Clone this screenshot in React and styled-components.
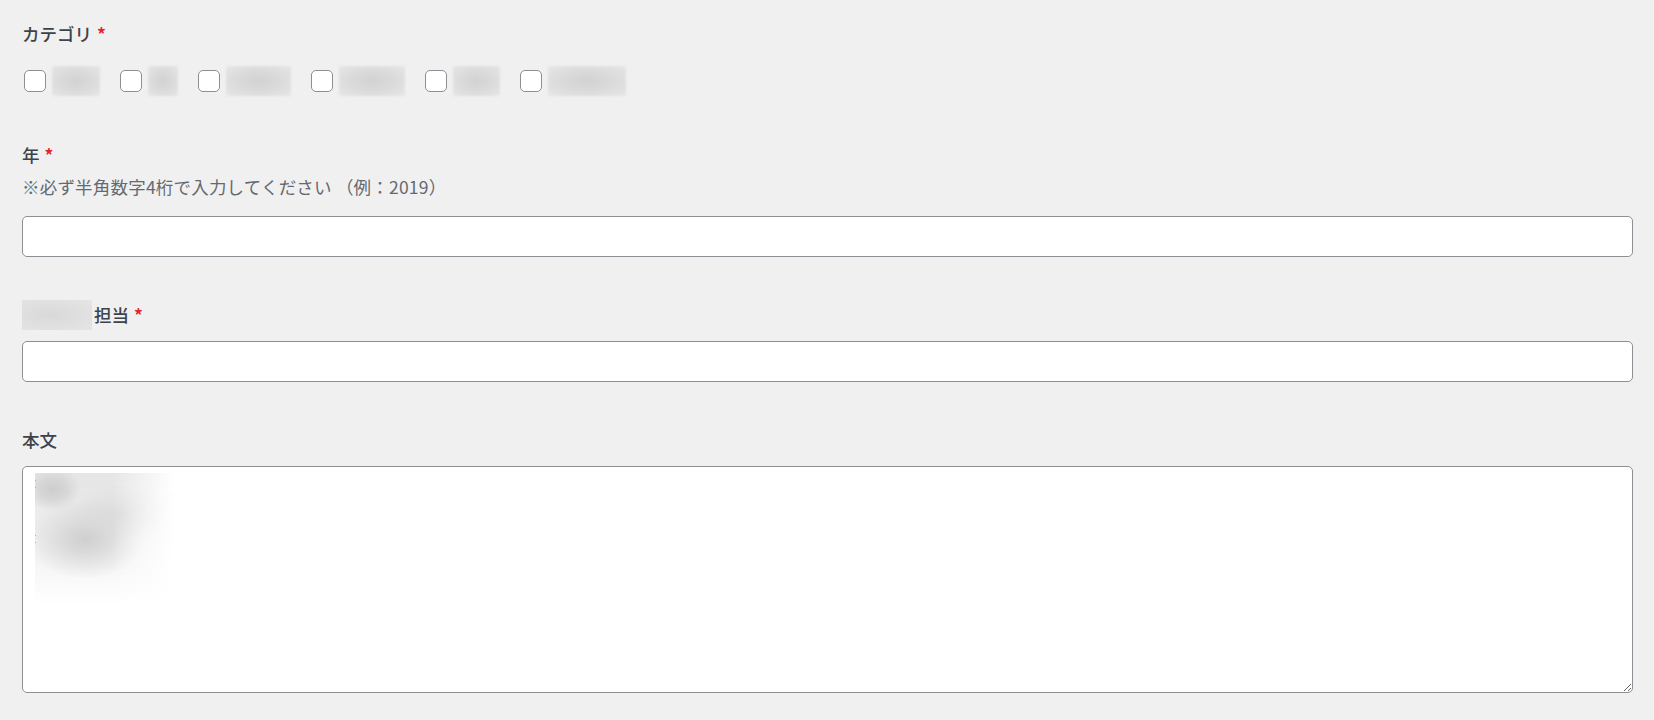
import React from 'react';
import styled, { createGlobalStyle } from 'styled-components';

const GlobalStyle = createGlobalStyle`
  html, body {
    margin: 0;
    padding: 0;
    background: #f0f0f1;
  }

  body {
    font-family: "Noto Sans CJK JP", "Noto Sans", "Liberation Sans", sans-serif;
    color: #3c434a;
  }
`;

const categories = [48, 30, 65, 66, 47, 78];

export default function App() {
  return (
    <>
      <GlobalStyle />
      <Form>
        <Field>
          <Label>
            カテゴリ
            <Required>*</Required>
          </Label>
          <CheckRow>
            {categories.map((w, i) => (
              <CheckItem key={i}>
                <Checkbox type="checkbox" />
                <Blurred style={{ width: w }} />
              </CheckItem>
            ))}
          </CheckRow>
        </Field>

        <Field>
          <Label>
            年
            <Required>*</Required>
          </Label>
          <Description>※必ず半角数字4桁で入力してください （例：2019）</Description>
          <TextInput type="text" gap={17} />
        </Field>

        <Field>
          <Label>
            <NameBlur />
            担当
            <Required>*</Required>
          </Label>
          <TextInput type="text" />
        </Field>

        <Field>
          <Label>本文</Label>
          <AreaWrap>
            <TextArea />
            <BodyBlur>
              <Mark top={7} />
              <Mark top={62} />
            </BodyBlur>
          </AreaWrap>
        </Field>
      </Form>
    </>
  );
}

const Form = styled.div`
  padding: 22px 21px 0 22px;
`;

const Field = styled.div`
  display: flex;
  flex-direction: column;
  margin-bottom: 46px;
`;

const Label = styled.label`
  display: flex;
  align-items: center;
  height: 24px;
  font-size: 17.5px;
  line-height: 24px;
  font-weight: 500;
  color: #3c434a;
`;

const Required = styled.span`
  margin-left: 5px;
  color: #e3262b;
  font-weight: 600;
`;

const CheckRow = styled.div`
  display: flex;
  align-items: center;
  height: 32px;
  margin-top: 19px;
  padding-left: 2px;
`;

const CheckItem = styled.div`
  display: flex;
  align-items: center;
  gap: 6px;
  margin-right: 20px;
`;

const Checkbox = styled.input`
  appearance: none;
  box-sizing: border-box;
  width: 22px;
  height: 22px;
  margin: 0;
  border: 1px solid #8c8f94;
  border-radius: 5px;
  background: #fff;
`;

const Blurred = styled.span`
  display: block;
  height: 30px;
  border-radius: 2px;
  background: radial-gradient(ellipse at center, #d2d2d2 0%, #dadada 45%, #e6e6e6 100%);
  filter: blur(1px);
`;

const NameBlur = styled.span`
  display: block;
  width: 70px;
  height: 30px;
  margin: -3px 2px -3px 0;
  background: radial-gradient(ellipse at 40% 50%, #d9d9d9 0%, #dfdfdf 50%, #e5e5e5 100%);
`;

const Description = styled.p`
  margin: 8px 0 0;
  font-size: 17.5px;
  line-height: 24px;
  color: #646970;
  letter-spacing: 0.2px;
`;

const TextInput = styled.input`
  box-sizing: border-box;
  width: 100%;
  height: 41px;
  margin: ${(props) => props.gap || 14}px 0 0;
  border: 1px solid #8c8f94;
  border-radius: 5px;
  background: #fff;
  outline: none;
`;

const AreaWrap = styled.div`
  position: relative;
  margin-top: 14px;
`;

const TextArea = styled.textarea`
  display: block;
  box-sizing: border-box;
  width: 100%;
  height: 227px;
  margin: 0;
  border: 1px solid #8c8f94;
  border-radius: 5px;
  background: #fff;
  outline: none;
  resize: vertical;
`;

const BodyBlur = styled.div`
  position: absolute;
  left: 13px;
  top: 7px;
  width: 140px;
  height: 132px;
  background:
    radial-gradient(ellipse 28px 22px at 18px 16px, #cdcdcd 0, rgba(212, 212, 212, 0.85) 50%, rgba(255, 255, 255, 0) 100%),
    radial-gradient(ellipse 60px 40px at 50px 66px, #cfcfcf 0, rgba(214, 214, 214, 0.85) 35%, rgba(255, 255, 255, 0) 100%),
    radial-gradient(ellipse 60px 30px at 85px 40px, rgba(218, 218, 218, 0.9) 0, rgba(255, 255, 255, 0) 100%),
    linear-gradient(to bottom, rgba(226, 226, 226, 0.9), rgba(240, 240, 240, 0.6) 70%, rgba(255, 255, 255, 0));
  -webkit-mask-image: linear-gradient(to right, #000 55%, transparent 100%);
  mask-image: linear-gradient(to right, #000 55%, transparent 100%);
`;

const Mark = styled.span`
  position: absolute;
  left: -1px;
  top: ${(props) => props.top}px;
  width: 2px;
  height: 6px;
  border-top: 1px dashed #f3a24a;
  border-bottom: 1px dashed #f3a24a;
`;
